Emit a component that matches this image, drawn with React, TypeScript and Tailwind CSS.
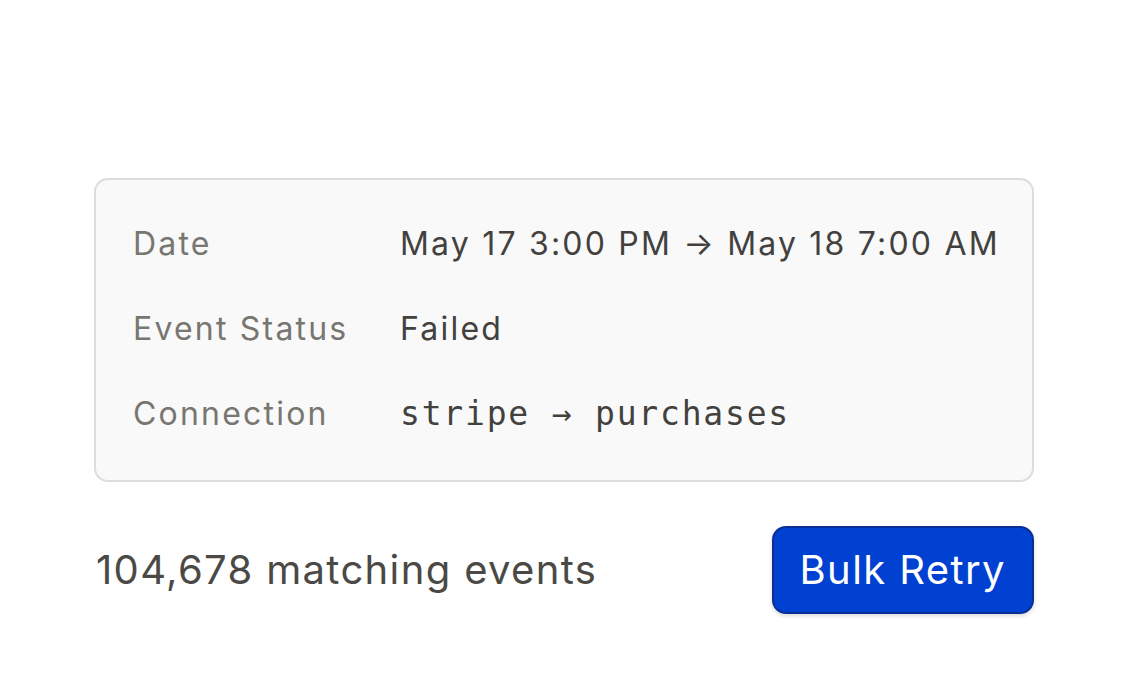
import React from "react";

export default function App() {
  const inter = { fontFamily: "Inter, 'Noto Sans', sans-serif" };
  return (
    <div className="w-[1128px] h-[696px] bg-white pt-[178px] px-[94px]" style={inter}>
      <div className="rounded-[14px] border-2 border-[#dddddc] bg-[#f9f9f9] pl-[37px] pr-[30px] pt-[40px] pb-[42px]">
        <div className="grid grid-cols-[267px_1fr] gap-y-[37px] text-[32px] leading-[48px] tracking-[2.2px]">
          <div className="text-[#777671]">Date</div>
          <div className="text-[#42413e]">May 17 3:00 PM → May 18 7:00 AM</div>
          <div className="text-[#777671]">Event Status</div>
          <div className="text-[#42413e]">Failed</div>
          <div className="text-[#777671]">Connection</div>
          <div
            className="text-[#42413e] text-[33px] tracking-[1.8px]"
            style={{ fontFamily: "'DejaVu Sans Mono', 'Liberation Mono', monospace" }}
          >
            stripe → purchases
          </div>
        </div>
      </div>
      <div className="mt-[44px] flex items-center justify-between">
        <div className="pl-[2px] text-[40px] tracking-[1.35px] text-[#4a4945]">104,678 matching events</div>
        <button className="h-[88px] rounded-[14px] border-2 border-[#0b2f94] bg-[#0041d1] px-[26px] text-[40px] tracking-[1.4px] text-white shadow-[0_2px_4px_rgba(0,0,0,0.15)]">
          Bulk Retry
        </button>
      </div>
    </div>
  );
}
